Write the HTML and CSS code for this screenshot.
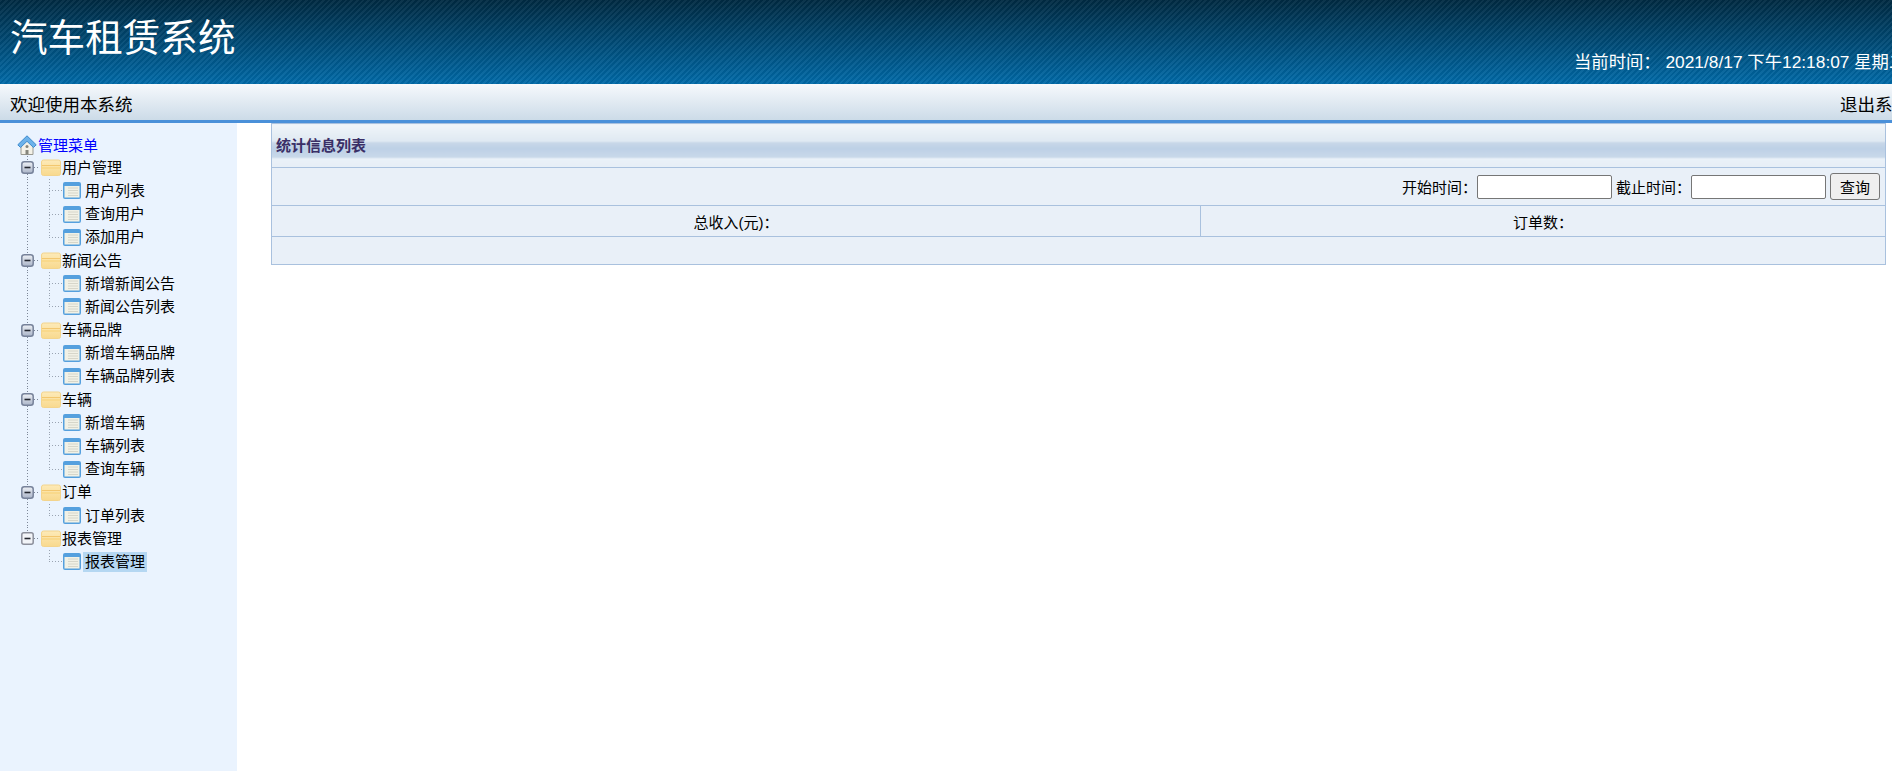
FILE: index.html
```html
<!DOCTYPE html>
<html lang="zh-CN">
<head>
  <meta charset="UTF-8" />
  <title>汽车租赁系统</title>
  <link rel="stylesheet" href="styles.css">
</head>

<body>
  <svg class="sprite" xmlns="http://www.w3.org/2000/svg">
    <defs>
      <linearGradient id="box-fill" x1="0" y1="0" x2="0" y2="1">
        <stop offset="0" stop-color="#eef1f6"/>
        <stop offset="1" stop-color="#aab4c8"/>
      </linearGradient>
      <linearGradient id="folder-fill" x1="0" y1="0" x2="0" y2="1">
        <stop offset="0" stop-color="#fdeab8"/>
        <stop offset="1" stop-color="#f8d98e"/>
      </linearGradient>
    </defs>
    <symbol id="home" viewBox="0 0 20 20">
      <path d="M4 9v10.500h12V9L10 4z" fill="#f3f1e8" stroke="#9a9a92"/>
      <path d="M8.500 19.500V15h3v4.500z" fill="#85857c"/>
      <circle cx="10" cy="11.500" r="1.500" fill="#85857c"/>
      <path d="M10 .8 .8 9.800l2.700 2.700L10 6.300l6.500 6.200 2.700-2.700z" fill="#6cb2ea" stroke="#3f8bcd" stroke-linejoin="round"/>
    </symbol>
    <symbol id="minus" viewBox="0 0 13 13">
      <rect x=".8" y=".8" width="11.400" height="11.400" rx="2.500" fill="url(#box-fill)" stroke="#77829a" stroke-width="1.500"/>
      <path d="M3.500 6.500h6" stroke="#23262f" stroke-width="1.600"/>
    </symbol>
    <symbol id="minus-last" viewBox="0 0 13 13">
      <rect x=".8" y=".8" width="11.400" height="11.400" rx="2" fill="#f2f4f8" stroke="#8c8f9b" stroke-width="1.500"/>
      <path d="M3.500 6.500h6" stroke="#23262f" stroke-width="1.600"/>
    </symbol>
    <symbol id="folder" viewBox="0 0 20 17">
      <path d="M.5 3q0-2 2-2h15q2 0 2 2v11.500q0 2-2 2h-15q-2 0-2-2z" fill="url(#folder-fill)" stroke="#f3d48d"/>
      <path d="M1 6h18v1H1z" fill="#f3c76f"/>
      <path d="M1 8h18v2H1z" fill="#f9d98b"/>
    </symbol>
    <symbol id="page" viewBox="0 0 18 17">
      <rect x="0" y="0" width="18" height="17" rx="2" fill="#55a0de"/>
      <rect x="1.500" y="4" width="15" height="11.500" fill="#f1f1e6"/>
      <path d="M5 6h10M5 8.500h10M5 11h10M5 13.500h10" stroke="#d6d6ca"/>
    </symbol>
  </svg>

  <div class="page">
    <header class="banner">
      <h1>汽车租赁系统</h1>
      <div class="clock">当前时间：&nbsp;2021/8/17 下午12:18:07 星期二</div>
    </header>
    <div class="navbar">
      <span>欢迎使用本系统</span>
      <a href="#">退出系统</a>
    </div>

    <div class="content">
      <aside class="sidebar">
        <div class="row root"><svg class="icon home"><use href="#home"/></svg><a href="#">管理菜单</a></div>

        <div class="row"><i class="cell line"></i><svg class="icon box"><use href="#minus"/></svg><svg class="icon folder"><use href="#folder"/></svg><span>用户管理</span></div>
        <div class="row"><i class="cell trunk"></i><i class="cell tee"></i><svg class="icon leaf"><use href="#page"/></svg><span>用户列表</span></div>
        <div class="row"><i class="cell trunk"></i><i class="cell tee"></i><svg class="icon leaf"><use href="#page"/></svg><span>查询用户</span></div>
        <div class="row"><i class="cell trunk"></i><i class="cell ell"></i><svg class="icon leaf"><use href="#page"/></svg><span>添加用户</span></div>

        <div class="row"><i class="cell line"></i><svg class="icon box"><use href="#minus"/></svg><svg class="icon folder"><use href="#folder"/></svg><span>新闻公告</span></div>
        <div class="row"><i class="cell trunk"></i><i class="cell tee"></i><svg class="icon leaf"><use href="#page"/></svg><span>新增新闻公告</span></div>
        <div class="row"><i class="cell trunk"></i><i class="cell ell"></i><svg class="icon leaf"><use href="#page"/></svg><span>新闻公告列表</span></div>

        <div class="row"><i class="cell line"></i><svg class="icon box"><use href="#minus"/></svg><svg class="icon folder"><use href="#folder"/></svg><span>车辆品牌</span></div>
        <div class="row"><i class="cell trunk"></i><i class="cell tee"></i><svg class="icon leaf"><use href="#page"/></svg><span>新增车辆品牌</span></div>
        <div class="row"><i class="cell trunk"></i><i class="cell ell"></i><svg class="icon leaf"><use href="#page"/></svg><span>车辆品牌列表</span></div>

        <div class="row"><i class="cell line"></i><svg class="icon box"><use href="#minus"/></svg><svg class="icon folder"><use href="#folder"/></svg><span>车辆</span></div>
        <div class="row"><i class="cell trunk"></i><i class="cell tee"></i><svg class="icon leaf"><use href="#page"/></svg><span>新增车辆</span></div>
        <div class="row"><i class="cell trunk"></i><i class="cell tee"></i><svg class="icon leaf"><use href="#page"/></svg><span>车辆列表</span></div>
        <div class="row"><i class="cell trunk"></i><i class="cell ell"></i><svg class="icon leaf"><use href="#page"/></svg><span>查询车辆</span></div>

        <div class="row"><i class="cell line"></i><svg class="icon box"><use href="#minus"/></svg><svg class="icon folder"><use href="#folder"/></svg><span>订单</span></div>
        <div class="row"><i class="cell trunk"></i><i class="cell ell"></i><svg class="icon leaf"><use href="#page"/></svg><span>订单列表</span></div>

        <div class="row"><i class="cell end"></i><svg class="icon box"><use href="#minus-last"/></svg><svg class="icon folder"><use href="#folder"/></svg><span>报表管理</span></div>
        <div class="row"><i class="cell"></i><i class="cell ell"></i><svg class="icon leaf"><use href="#page"/></svg><span class="selected">报表管理</span></div>
      </aside>

      <main class="main">
        <table class="stats">
          <colgroup>
            <col class="col-income" />
            <col />
          </colgroup>
          <tr>
            <th colspan="2" class="title">统计信息列表</th>
          </tr>
          <tr class="search-row">
            <td colspan="2">
              <form class="search">
                <label for="start">开始时间：</label>
                <input type="text" id="start" />
                <label for="end">截止时间：</label>
                <input type="text" id="end" />
                <button type="button">查询</button>
              </form>
            </td>
          </tr>
          <tr class="total-row">
            <td class="income">总收入(元)：</td>
            <td>订单数：</td>
          </tr>
          <tr class="empty-row">
            <td colspan="2"></td>
          </tr>
        </table>
      </main>
    </div>
  </div>
</body>
</html>
```

FILE: styles.css
```css
html,
body {
  margin: 0;
  height: 100%;
  overflow: hidden;
}
body {
  font-family: "Liberation Sans", "Noto Sans CJK SC", sans-serif;
  font-size: 15px;
  color: #000;
  background: #fff;
}
.sprite {
  display: block;
  width: 0;
  height: 0;
}
.page {
  width: 1960px;
  height: 100%;
  display: flex;
  flex-direction: column;
}

/* top banner */
.banner {
  height: 84px;
  flex: none;
  display: flex;
  padding: 0 0 0 10px;
  box-sizing: border-box;
  color: #fff;
  background:
    repeating-linear-gradient(135deg, rgba(255, 255, 255, .05) 0 2px, rgba(0, 0, 0, .05) 2px 4px),
    linear-gradient(#002a42, #006aa8);
}
.banner h1 {
  margin: 14px auto 0 0;
  font-size: 37.600px;
  font-weight: normal;
  line-height: 48px;
}
.clock {
  flex: none;
  width: 386px;
  margin-top: 51px;
  font-size: 17.330px;
  line-height: 22px;
  white-space: nowrap;
}

/* welcome bar */
.navbar {
  height: 39px;
  flex: none;
  display: flex;
  justify-content: space-between;
  align-items: center;
  padding: 3px 0 0 10px;
  box-sizing: border-box;
  font-size: 17.500px;
  background: linear-gradient(#f6f9fc, #ccdbe8);
  border-bottom: 3px solid #4a90d9;
}
.navbar a {
  width: 120px;
  color: #000;
  text-decoration: none;
  white-space: nowrap;
}

.content {
  flex: 1;
  display: flex;
  min-height: 0;
}

/* menu tree */
.sidebar {
  width: 237px;
  flex: none;
  box-sizing: border-box;
  padding: 10px 0 0 16px;
  background: #eaf3fe;
}
.row {
  height: 23.200px;
  display: flex;
  align-items: center;
  white-space: nowrap;
}
.row span {
  line-height: 20px;
}
.root a {
  color: #00f;
  text-decoration: none;
}
.icon {
  flex: none;
}
.home {
  width: 20px;
  height: 20px;
  margin: 0 1px 0 1px;
}
.box {
  width: 13px;
  height: 13px;
  margin-left: -19px;
  margin-right: 7px;
}
.folder {
  width: 20px;
  height: 17px;
  margin-right: 1px;
}
.leaf {
  width: 18px;
  height: 17px;
  margin: 0 4px 0 1px;
}
.cell {
  width: 23px;
  height: 100%;
  flex: none;
  background-repeat: no-repeat;
}
.line {
  width: 24px;
  background-image:
    repeating-linear-gradient(#7d8798 0 1px, transparent 1px 3px),
    repeating-linear-gradient(90deg, #7d8798 0 1px, transparent 1px 3px);
  background-size: 1px 100%, 9px 1px;
  background-position: 11px 0, 15px 11px;
}
.end {
  width: 24px;
  background-image:
    repeating-linear-gradient(#7d8798 0 1px, transparent 1px 3px),
    repeating-linear-gradient(90deg, #7d8798 0 1px, transparent 1px 3px);
  background-size: 1px 11px, 9px 1px;
  background-position: 11px 0, 15px 11px;
}
.trunk {
  background-image: repeating-linear-gradient(#7d8798 0 1px, transparent 1px 3px);
  background-size: 1px 100%;
  background-position: 11px 0;
}
.tee {
  background-image:
    repeating-linear-gradient(#9aa4b2 0 1px, transparent 1px 3px),
    repeating-linear-gradient(90deg, #9aa4b2 0 1px, transparent 1px 3px);
  background-size: 1px 100%, 13px 1px;
  background-position: 10px 0, 10px 11px;
}
.ell {
  background-image:
    repeating-linear-gradient(#9aa4b2 0 1px, transparent 1px 3px),
    repeating-linear-gradient(90deg, #9aa4b2 0 1px, transparent 1px 3px);
  background-size: 1px 12px, 13px 1px;
  background-position: 10px 0, 10px 11px;
}
.selected {
  padding: 0 2px;
  margin-left: -2px;
  background: #b5d7f2;
}

/* stats table */
.main {
  flex: none;
  width: 1649px;
  padding-left: 34px;
  box-sizing: border-box;
}
.stats {
  width: 1615px;
  border-collapse: collapse;
  border: 1px solid #a9c1de;
  background: #e9f0f8;
  table-layout: fixed;
}
.col-income {
  width: 929px;
}
.stats td,
.stats th {
  padding: 0;
  border-top: 1px solid #a9c1de;
}
.stats .title {
  height: 44px;
  padding: 12px 0 0 4px;
  box-sizing: border-box;
  text-align: left;
  vertical-align: top;
  border-top: 0;
  font-size: 15px;
  line-height: 19px;
  font-weight: bold;
  color: #3a2f66;
  background: linear-gradient(#f0f5f9 0, #dfe9f2 17px, #c9d8e9 18px, #bdd0e6 24px, #c9d9ea 33px, #eaf1f8 34px, #e6eef6 44px);
}
.search-row td {
  height: 37px;
}
.search {
  display: flex;
  justify-content: flex-end;
  align-items: center;
  padding-right: 5px;
}
.search input {
  width: 135px;
  height: 24px;
  box-sizing: border-box;
  margin: 0 4px 0 0;
  padding: 0 2px;
  border: 1px solid #767676;
  border-radius: 2px;
  background: #fff;
}
.search button {
  width: 50px;
  height: 27px;
  margin: 0;
  padding: 0;
  font: inherit;
  border: 1px solid #767676;
  border-radius: 3px;
  background: #efefef;
}
.total-row td {
  height: 30px;
  text-align: center;
}
.total-row .income {
  border-right: 1px solid #a9c1de;
}
.empty-row td {
  height: 27px;
}
```
